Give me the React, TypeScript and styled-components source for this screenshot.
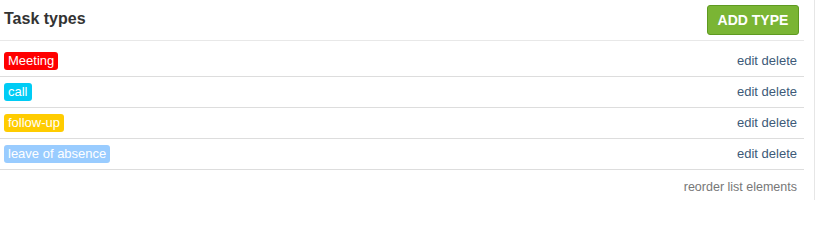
import styled, { createGlobalStyle } from 'styled-components';

const GlobalStyle = createGlobalStyle`
  html, body {
    margin: 0;
    padding: 0;
    background: #ffffff;
    font-family: "Liberation Sans", Arial, sans-serif;
  }
`;

const Page = styled.div`
  width: 815px;
  min-height: 200px;
  border-right: 1px solid #e6e6e6;
  padding-right: 10px;
  box-sizing: border-box;
`;

const Header = styled.div`
  display: flex;
  align-items: center;
  justify-content: space-between;
  height: 41px;
  padding: 0 5px 0 4px;
  border-bottom: 1px solid #e8e8e8;
  box-sizing: border-box;
`;

const Title = styled.h2`
  margin: 0;
  font-size: 16px;
  font-weight: bold;
  color: #333333;
  padding-bottom: 2px;
`;

const AddButton = styled.button`
  height: 30px;
  width: 92px;
  margin-top: -1px;
  background: #7ab534;
  border: 1px solid #5e9a20;
  border-radius: 3px;
  color: #ffffff;
  font-family: "Liberation Sans", Arial, sans-serif;
  font-size: 14px;
  font-weight: bold;
  text-transform: uppercase;
  cursor: pointer;
`;

const List = styled.ul`
  list-style: none;
  margin: 0;
  padding: 5px 0 0;
`;

const Row = styled.li`
  display: flex;
  align-items: center;
  justify-content: space-between;
  padding: 6px 7px 6px 4px;
  border-bottom: 1px solid #dddddd;
`;

const Label = styled.span<{ $color: string }>`
  display: inline-block;
  height: 18px;
  line-height: 18px;
  padding: 0 4px;
  border-radius: 3px;
  background: ${(p) => p.$color};
  color: #ffffff;
  font-size: 13px;
`;

const Actions = styled.span`
  font-size: 13px;
  line-height: 18px;
  color: #3d5a78;
`;

const ActionLink = styled.a`
  color: inherit;
  text-decoration: none;
  cursor: pointer;
`;

const Footer = styled.div`
  display: flex;
  justify-content: flex-end;
  padding: 10px 7px 0 0;
`;

const FooterLink = styled.a`
  font-size: 12.5px;
  color: #777777;
  text-decoration: none;
  cursor: pointer;
`;

const types = [
  { name: 'Meeting', color: '#ff0000' },
  { name: 'call', color: '#00ccf5' },
  { name: 'follow-up', color: '#ffcc00' },
  { name: 'leave of absence', color: '#99ccff' },
];

export default function App() {
  return (
    <>
      <GlobalStyle />
      <Page>
        <Header>
          <Title>Task types</Title>
          <AddButton>Add type</AddButton>
        </Header>
        <List>
          {types.map((t) => (
            <Row key={t.name}>
              <Label $color={t.color}>{t.name}</Label>
              <Actions>
                <ActionLink>edit</ActionLink> <ActionLink>delete</ActionLink>
              </Actions>
            </Row>
          ))}
        </List>
        <Footer>
          <FooterLink>reorder list elements</FooterLink>
        </Footer>
      </Page>
    </>
  );
}
